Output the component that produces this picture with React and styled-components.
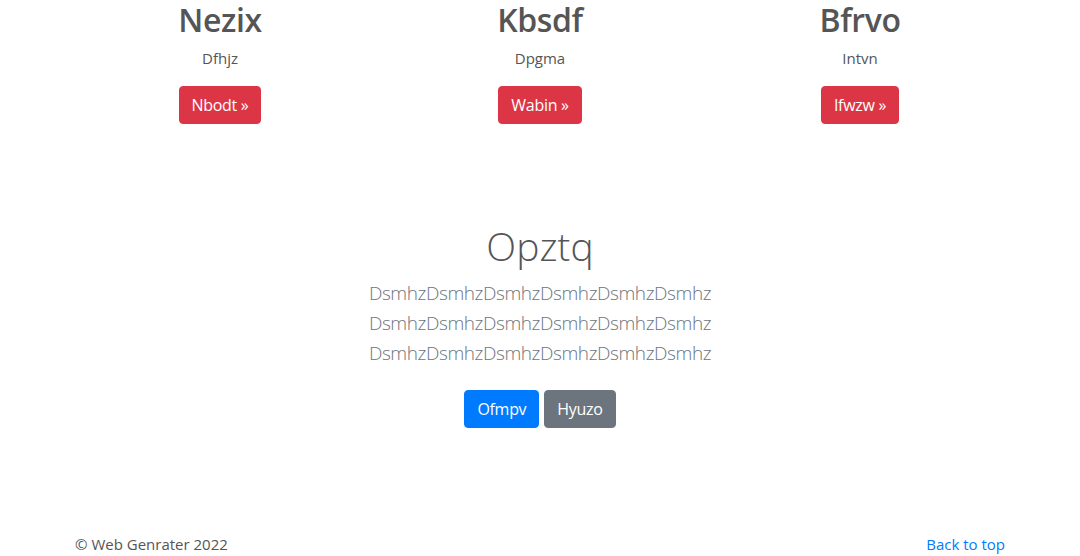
import React from "react";
import styled, { createGlobalStyle } from "styled-components";

const GlobalStyle = createGlobalStyle`
  html, body {
    margin: 0;
    padding: 0;
    background: #fff;
  }
  body {
    font-family: "Segoe UI", "Open Sans", "Liberation Sans", sans-serif;
    font-size: 16px;
    line-height: 1.5;
    color: #555;
  }
  * {
    box-sizing: border-box;
  }
`;

const features = [
  { title: "Nezix", text: "Dfhjz", action: "Nbodt" },
  { title: "Kbsdf", text: "Dpgma", action: "Wabin" },
  { title: "Bfrvo", text: "Intvn", action: "Ifwzw" },
];

export default function App() {
  return (
    <>
      <GlobalStyle />
      <Page>
        <Container>
          <Row>
            {features.map((f) => (
              <Column key={f.title}>
                <Heading>{f.title}</Heading>
                <Text>{f.text}</Text>
                <p>
                  <Button $variant="danger">{f.action} &raquo;</Button>
                </p>
              </Column>
            ))}
          </Row>
        </Container>

        <Jumbotron>
          <Container>
            <Title>Opztq</Title>
            <Lead>
              DsmhzDsmhzDsmhzDsmhzDsmhzDsmhz
              <br />
              DsmhzDsmhzDsmhzDsmhzDsmhzDsmhz
              <br />
              DsmhzDsmhzDsmhzDsmhzDsmhzDsmhz
            </Lead>
            <Actions>
              <Button $variant="primary">Ofmpv</Button>
              <Button $variant="secondary">Hyuzo</Button>
            </Actions>
          </Container>
        </Jumbotron>

        <Footer>
          <Container>
            <FooterRow>
              <span>&copy; Web Genrater 2022</span>
              <TopLink href="#">Back to top</TopLink>
            </FooterRow>
          </Container>
        </Footer>
      </Page>
    </>
  );
}

const Page = styled.div`
  width: 100%;
`;

const Container = styled.div`
  max-width: 960px;
  margin: 0 auto;
  padding: 0 15px;
`;

const Row = styled.div`
  display: grid;
  grid-template-columns: repeat(3, 1fr);
  margin: 0 -15px;
`;

const Column = styled.div`
  padding: 0 15px;
  text-align: center;

  p {
    margin: 0 0 16px;
  }
`;

const Heading = styled.h2`
  margin: 0 0 6px;
  font-size: 32px;
  font-weight: 600;
  line-height: 40px;
  color: #555;
  letter-spacing: -0.4px;
`;

const Text = styled.p`
  margin: 0 0 16px;
  font-size: 15px;
  line-height: 24px;
  color: #555;
`;

const colors = {
  danger: "#dc3545",
  primary: "#007bff",
  secondary: "#6c757d",
};

const Button = styled.a`
  display: inline-block;
  padding: 6px 12px;
  border: 1px solid ${(p) => colors[p.$variant]};
  border-radius: 4px;
  background: ${(p) => colors[p.$variant]};
  color: #fff;
  font-size: 16px;
  line-height: 24px;
  text-decoration: none;
  letter-spacing: -0.3px;
`;

const Jumbotron = styled.section`
  padding-top: 82px;
  text-align: center;
`;

const Title = styled.h1`
  margin: 0 0 8px;
  font-size: 39px;
  font-weight: 300;
  line-height: 48px;
  color: #555;
`;

const Lead = styled.p`
  margin: 0;
  font-size: 19px;
  font-weight: 300;
  line-height: 30px;
  color: #6c757d;
  letter-spacing: -0.4px;
`;

const Actions = styled.div`
  display: flex;
  justify-content: center;
  gap: 5px;
  margin: 22px 0 8px;
`;

const Footer = styled.footer`
  padding-top: 96px;
`;

const FooterRow = styled.div`
  display: flex;
  justify-content: space-between;
  font-size: 15px;
  line-height: 24px;
  color: #555;
`;

const TopLink = styled.a`
  color: #007bff;
  text-decoration: none;
`;
